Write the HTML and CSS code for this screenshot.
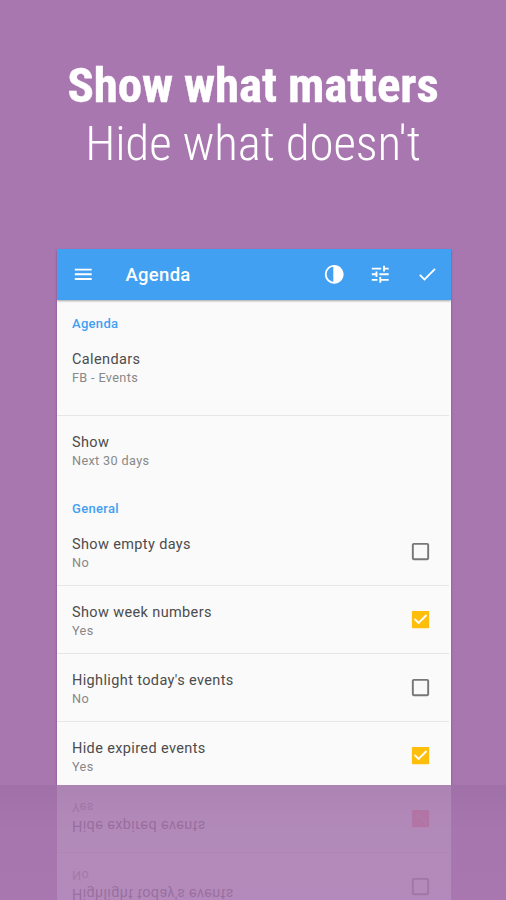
FILE: index.html
```html
<!DOCTYPE html>
<html lang="en">
<head>
<meta charset="utf-8">
<title>Agenda</title>
<link rel="stylesheet" href="styles.css">
</head>
<body>
<svg class="defs" aria-hidden="true">
  <symbol id="box" viewBox="0 0 24 24"><path d="M19 5v14H5V5h14m0-2H5c-1.1 0-2 .9-2 2v14c0 1.1.9 2 2 2h14c1.1 0 2-.9 2-2V5c0-1.1-.9-2-2-2z"/></symbol>
  <symbol id="checked" viewBox="0 0 24 24"><path d="M20 3H4a1 1 0 0 0-1 1v16a1 1 0 0 0 1 1h16a1 1 0 0 0 1-1V4a1 1 0 0 0-1-1z"/><path d="M10 17l-5-5 1.41-1.41L10 14.17l7.59-7.59L19 8z" fill="currentColor"/></symbol>
</svg>
<header class="headline">
  <h1>Show what matters</h1>
  <p>Hide what doesn't</p>
</header>
<main class="card">
  <div class="toolbar">
    <svg class="icon" viewBox="0 0 24 24"><path d="M3 18h18v-2H3v2zm0-5h18v-2H3v2zm0-7v2h18V6H3z"/></svg>
    <h2>Agenda</h2>
    <svg class="icon" viewBox="0 0 24 24"><path d="M12 22c5.52 0 10-4.48 10-10S17.52 2 12 2 2 6.48 2 12s4.480 10 10 10zm-1-17.930v15.860C7.050 19.440 4 16.080 4 12s3.050-7.440 7-7.930z"/></svg>
    <svg class="icon" viewBox="0 0 24 24"><path d="M3 17v2h6v-2H3zM3 5v2h10V5H3zm10 16v-2h8v-2h-8v-2h-2v6h2zM7 9v2H3v2h4v2h2V9H7zm14 4v-2H11v2h10zm-6-4h2V7h4V5h-4V3h-2v6z"/></svg>
    <svg class="icon" viewBox="0 0 24 24"><path d="M9 16.170L4.830 12l-1.420 1.410L9 19 21 7l-1.410-1.410z"/></svg>
  </div>
  <h3 class="section">Agenda</h3>
  <div class="row tall"><div><b>Calendars</b><small>FB - Events</small></div></div>
  <div class="row open"><div><b>Show</b><small>Next 30 days</small></div></div>
  <h3 class="section later">General</h3>
  <div class="row"><div><b>Show empty days</b><small>No</small></div><svg class="tick"><use href="#box"/></svg></div>
  <div class="row"><div><b>Show week numbers</b><small>Yes</small></div><svg class="tick on"><use href="#checked"/></svg></div>
  <div class="row"><div><b>Highlight today's events</b><small>No</small></div><svg class="tick"><use href="#box"/></svg></div>
  <div class="row"><div><b>Hide expired events</b><small>Yes</small></div><svg class="tick on"><use href="#checked"/></svg></div>
</main>
<footer class="floor">
  <div class="mirror" aria-hidden="true">
    <div class="row"><div><b>Highlight today's events</b><small>No</small></div><svg class="tick"><use href="#box"/></svg></div>
    <div class="row"><div><b>Hide expired events</b><small>Yes</small></div><svg class="tick on"><use href="#checked"/></svg></div>
  </div>
</footer>
</body>
</html>
```

FILE: styles.css
```css
* { box-sizing: border-box; }
body {
  margin: 0;
  width: 506px;
  height: 900px;
  overflow: hidden;
  display: flex;
  flex-direction: column;
  background: #a877b0;
  font-family: Roboto, "Liberation Sans", sans-serif;
}
.defs { display: none; }
.headline {
  height: 249px;
  padding-top: 57px;
  color: #fff;
  text-align: center;
  font-stretch: 75%;
  white-space: nowrap;
}
.headline h1, .headline p {
  margin: 0;
  font-size: 49px;
  line-height: 58px;
  letter-spacing: -.12px;
}
.headline h1 { font-weight: 700; -webkit-text-stroke: .4px #fff; }
.headline p { font-weight: 300; }
.card {
  flex: none;
  width: 394px;
  height: 536px;
  margin-left: 57px;
  overflow: hidden;
  background: #fafafa;
  box-shadow: 0 1px 2px rgba(90, 20, 120, .5);
}
.toolbar {
  display: flex;
  align-items: center;
  height: 51px;
  padding: 0 13px 0 15px;
  gap: 23.7px;
  background: #42a0f2;
  color: #fff;
  box-shadow: 0 1px 2px rgba(0, 0, 0, .35);
}
.toolbar h2 {
  flex: 1;
  margin: 0 0 0 7.3px;
  font-size: 18.5px;
  font-weight: 500;
  line-height: 24px;
  letter-spacing: .3px;
}
.icon { flex: none; width: 22.5px; height: 22.5px; fill: #fff; }
.section {
  margin: 0;
  padding: 14px 15px 0;
  font-size: 13px;
  font-weight: 500;
  line-height: 19px;
  letter-spacing: .3px;
  color: #42a0f2;
}
.later { padding-top: 29px; }
.row {
  display: flex;
  flex: none;
  align-items: flex-start;
  justify-content: space-between;
  height: 68px;
  margin-right: 2px;
  padding: 16px 17.5px 0 15px;
  border-bottom: 1px solid #e6e6e6;
}
.tall { height: 83px; }
.open { height: 54px; border: 0; }
.row b, .row small {
  display: block;
  font-weight: 400;
  line-height: 19px;
}
.row b { font-size: 14.5px; line-height: 21px; letter-spacing: .37px; color: #4c4c4c; }
.row small { margin-top: -2px; font-size: 12.7px; letter-spacing: .35px; color: #888; }
.tick { width: 23px; height: 23px; margin-top: 6px; fill: #777; }
.tick.on { fill: #ffbe0b; color: #fff; }
.floor {
  flex: 1;
  padding-left: 57px;
  background: linear-gradient(#a070a8, #a776af 40%, #a877b0);
}
.mirror {
  display: flex;
  flex-direction: column;
  justify-content: flex-end;
  width: 394px;
  height: 115px;
  overflow: hidden;
  background: #f4fafa;
  opacity: .15;
  transform: scaleY(-1);
}
.mirror .row { border-color: #e0e0e0; }
.mirror .row:last-child { height: 67px; border: 0; }
.mirror .row b { color: #444; }
.mirror .row small { color: #888; }
.mirror .tick.on { fill: #fa7a7a; color: #fa9a9a; }
```
